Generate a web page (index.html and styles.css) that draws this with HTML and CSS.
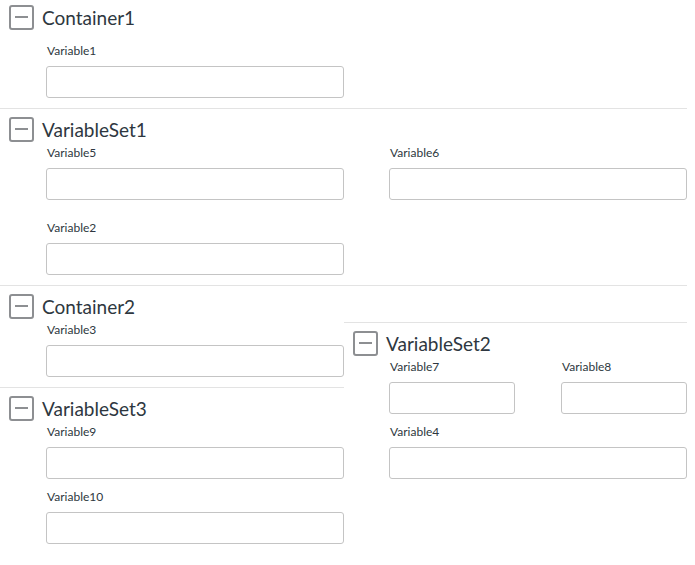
FILE: index.html
```html
<!DOCTYPE html>
<html lang="en">
  <head>
    <meta charset="UTF-8" />
    <meta name="viewport" content="width=device-width, initial-scale=1.0" />
    <title>Form Layout</title>
    <link rel="stylesheet" href="styles.css">
  </head>
  <body>
    <div class="form">
      <!-- Container1 -->
      <div class="section container">
        <div class="section-header">
          <span class="toggle"></span>
          <span class="section-title">Container1</span>
        </div>
        <div class="fields">
          <div class="field">
            <label>Variable1</label>
            <input type="text" />
          </div>
        </div>
      </div>

      <!-- VariableSet1 -->
      <div class="section">
        <div class="section-header">
          <span class="toggle"></span>
          <span class="section-title">VariableSet1</span>
        </div>
        <div class="fields two-col">
          <div class="field">
            <label>Variable5</label>
            <input type="text" />
          </div>
          <div class="field">
            <label>Variable6</label>
            <input type="text" />
          </div>
          <div class="field">
            <label>Variable2</label>
            <input type="text" />
          </div>
        </div>
      </div>

      <!-- Container2 with two columns -->
      <div class="row">
        <div class="column">
          <div class="section plain">
            <div class="section-header">
              <span class="toggle"></span>
              <span class="section-title">Container2</span>
            </div>
            <div class="fields">
              <div class="field">
                <label>Variable3</label>
                <input type="text" />
              </div>
            </div>
          </div>

          <div class="section">
            <div class="section-header">
              <span class="toggle"></span>
              <span class="section-title">VariableSet3</span>
            </div>
            <div class="fields">
              <div class="field">
                <label>Variable9</label>
                <input type="text" />
              </div>
              <div class="field">
                <label>Variable10</label>
                <input type="text" />
              </div>
            </div>
          </div>
        </div>

        <div class="column">
          <div class="section offset">
            <div class="section-header">
              <span class="toggle"></span>
              <span class="section-title">VariableSet2</span>
            </div>
            <div class="fields">
              <div class="pair">
                <div class="field">
                  <label>Variable7</label>
                  <input type="text" />
                </div>
                <div class="field">
                  <label>Variable8</label>
                  <input type="text" />
                </div>
              </div>
              <div class="field">
                <label>Variable4</label>
                <input type="text" />
              </div>
            </div>
          </div>
        </div>
      </div>
    </div>
  </body>
</html>
```

FILE: styles.css
```css
body {
  margin: 0;
  background: #fff;
  font-family: Lato, "Open Sans", sans-serif;
  color: #2e3740;
}

.form {
  width: 687px;
}

.section {
  border-top: 1px solid #e3e3e3;
  padding: 8px 0 10px;
}

/* top container sits right under the page edge */
.section.container {
  border-top: none;
  padding-top: 5px;
}

.section.plain {
  border-top: none;
}

.section-header {
  display: flex;
  align-items: center;
  gap: 8px;
  padding-left: 9px;
  height: 25px;
}

.toggle {
  position: relative;
  width: 21px;
  height: 21px;
  border: 2px solid #8d8f92;
  border-radius: 3px;
}

.toggle::after {
  content: "";
  position: absolute;
  left: 4px;
  right: 4px;
  top: 9px;
  height: 2px;
  background: #8d8f92;
}

.section-title {
  font-size: 19px;
  line-height: 25px;
}

.fields {
  padding-left: 46px;
  margin-top: 3px;
  display: flex;
  flex-direction: column;
  gap: 10px;
}

.container .fields {
  margin-top: 13px;
}

.fields.two-col {
  display: grid;
  grid-template-columns: 298px 298px;
  column-gap: 45px;
  row-gap: 20px;
}

.field {
  display: flex;
  flex-direction: column;
}

.field label {
  font-size: 12px;
  line-height: 16px;
  margin: 0 0 7px 1px;
}

.field input {
  box-sizing: border-box;
  width: 298px;
  height: 32px;
  border: 1px solid #c4c4c4;
  border-radius: 3px;
  margin: 0;
}

.row {
  display: flex;
  border-top: 1px solid #e3e3e3;
}

.column {
  width: 344px;
}

.column + .column {
  width: 343px;
}

.offset {
  margin-top: 36px;
}

.offset .fields {
  padding-left: 45px;
}

.pair {
  display: flex;
  gap: 46px;
}

.pair .field input {
  width: 126px;
}
```
